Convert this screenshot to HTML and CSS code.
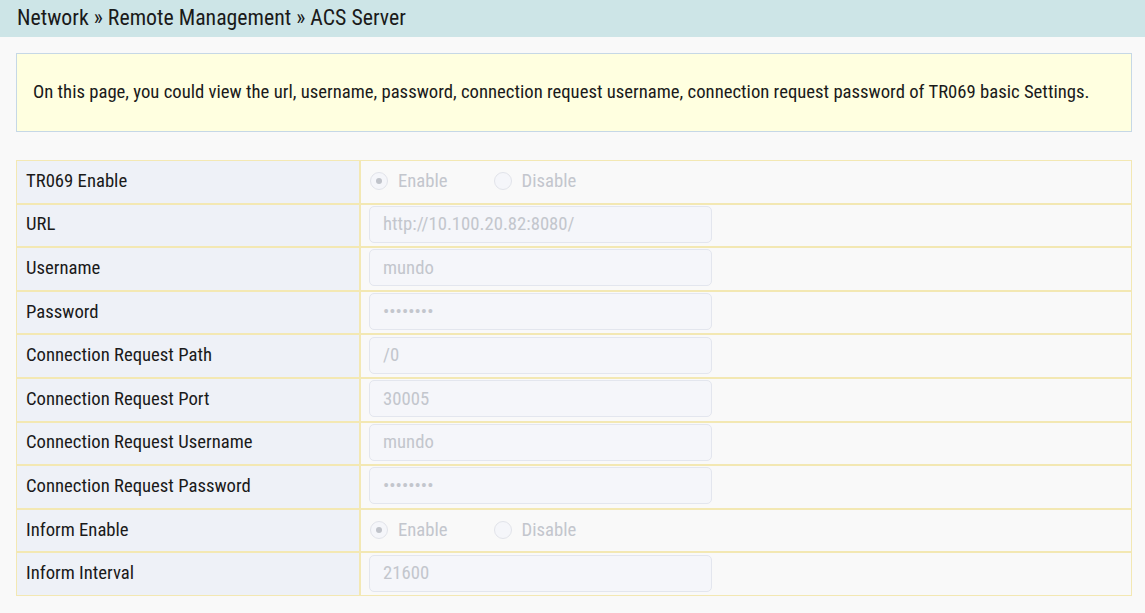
FILE: index.html
```html
<!DOCTYPE html>
<html lang="en">
<head>
    <meta charset="UTF-8">
    <title>ACS Server</title>
    <link rel="stylesheet" href="styles.css">
</head>
<body>
    <div class="crumbs">Network &raquo; Remote Management &raquo; ACS Server</div>

    <div class="page">
        <div class="tip">
            On this page, you could view the url, username, password, connection request username, connection request password of TR069 basic Settings.
        </div>

        <table class="form-table">
            <tr>
                <td class="label">TR069 Enable</td>
                <td class="value">
                    <div class="radios">
                        <label class="radio"><span class="dot checked"></span>Enable</label>
                        <label class="radio"><span class="dot"></span>Disable</label>
                    </div>
                </td>
            </tr>
            <tr>
                <td class="label">URL</td>
                <td class="value"><input class="field" type="text" value="http://10.100.20.82:8080/" disabled></td>
            </tr>
            <tr>
                <td class="label">Username</td>
                <td class="value"><input class="field" type="text" value="mundo" disabled></td>
            </tr>
            <tr>
                <td class="label">Password</td>
                <td class="value"><input class="field" type="password" value="12345678" disabled></td>
            </tr>
            <tr>
                <td class="label">Connection Request Path</td>
                <td class="value"><input class="field" type="text" value="/0" disabled></td>
            </tr>
            <tr>
                <td class="label">Connection Request Port</td>
                <td class="value"><input class="field" type="text" value="30005" disabled></td>
            </tr>
            <tr>
                <td class="label">Connection Request Username</td>
                <td class="value"><input class="field" type="text" value="mundo" disabled></td>
            </tr>
            <tr>
                <td class="label">Connection Request Password</td>
                <td class="value"><input class="field" type="password" value="12345678" disabled></td>
            </tr>
            <tr>
                <td class="label">Inform Enable</td>
                <td class="value">
                    <div class="radios">
                        <label class="radio"><span class="dot checked"></span>Enable</label>
                        <label class="radio"><span class="dot"></span>Disable</label>
                    </div>
                </td>
            </tr>
            <tr>
                <td class="label">Inform Interval</td>
                <td class="value"><input class="field" type="text" value="21600" disabled></td>
            </tr>
        </table>
    </div>
</body>
</html>
```

FILE: styles.css
```css
* { margin: 0; padding: 0; box-sizing: border-box; }
body {
    font-family: Roboto, "Liberation Sans", sans-serif;
    font-stretch: 87.5%;
    font-size: 18.7px;
    color: #1a1a1a;
    background: #f9f9f9;
}
.crumbs {
    height: 37px;
    line-height: 36px;
    padding-left: 17px;
    font-size: 21.8px;
    color: #1a1a1a;
    background: #cde5e7;
}
.page { padding: 16px 13px 16px 16px; }
.tip {
    background: #ffffe0;
    border: 1px solid #c6d8e6;
    padding: 0 16px;
    height: 79px;
    line-height: 77px;
}
.form-table {
    width: 100%;
    margin-top: 28px;
    border-collapse: separate;
    border-spacing: 0;
}
.form-table td {
    border: 1px solid #f3e8b3;
    height: 43.6px;
    vertical-align: middle;
}
.label {
    width: 344px;
    padding: 0 0 2px 9px;
    background: #eef1f7;
}
.value { padding: 0 0 2px 8px; background: #f9f9f9; }
.field {
    display: block;
    width: 343px;
    height: 37px;
    padding: 0 13px;
    border: 1px solid #e3e6ee;
    border-radius: 5px;
    background: #f5f6fa;
    font-family: inherit;
    font-stretch: inherit;
    font-size: 18.7px;
    color: #c3c6cd;
}
.radios { display: flex; align-items: center; }
.radio {
    display: flex;
    align-items: center;
    color: #c3c6cd;
    margin-right: 45px;
}
.dot {
    width: 18px;
    height: 18px;
    margin: 0 10px 0 1px;
    border: 1px solid #e2e4ea;
    border-radius: 50%;
    background: #f5f6fa;
    display: flex;
    align-items: center;
    justify-content: center;
}
.dot.checked::after {
    content: "";
    width: 6px;
    height: 6px;
    border-radius: 50%;
    background: #c0c3ca;
}
```
